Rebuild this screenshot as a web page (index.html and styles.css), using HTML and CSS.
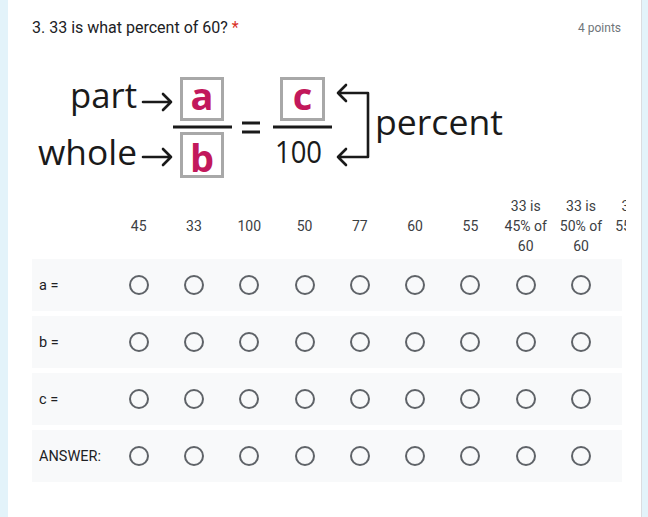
FILE: index.html
```html
<!DOCTYPE html>
<html lang="en">
<head>
<meta charset="utf-8">
<title>Question 3</title>
<link rel="stylesheet" href="styles.css">
</head>
<body>
<div class="card">
  <div class="title-row">
    <div class="title">3. 33 is what percent of 60? <span class="req">*</span></div>
    <div class="points">4 points</div>
  </div>
  <svg class="formula" width="480" height="125" viewBox="0 0 480 125" xmlns="http://www.w3.org/2000/svg">
    <g class="ink">
      <text x="38" y="48" font-size="34" textLength="67" lengthAdjust="spacingAndGlyphs">part</text>
      <text x="6" y="105" font-size="34" textLength="99" lengthAdjust="spacingAndGlyphs">whole</text>
      <text x="243" y="103" font-size="31" textLength="47" lengthAdjust="spacingAndGlyphs">100</text>
      <text x="343" y="75" font-size="34" textLength="128" lengthAdjust="spacingAndGlyphs">percent</text>
    </g>
    <g fill="none" stroke="#1a1a1a" stroke-width="2.6" stroke-linecap="round" stroke-linejoin="round">
      <path d="M111 42 H139 M131 34 L139 42 L131 50"/>
      <path d="M111 97 H139 M131 89 L139 97 L131 105"/>
      <path d="M306 33 H336 V97 H306 M314 25 L306 33 L314 41 M314 89 L306 97 L314 105"/>
    </g>
    <g stroke="#1a1a1a" stroke-width="3">
      <line x1="141" y1="67" x2="200" y2="67"/>
      <line x1="241" y1="67" x2="300" y2="67"/>
      <line x1="210" y1="63" x2="228" y2="63"/>
      <line x1="210" y1="72" x2="228" y2="72"/>
    </g>
    <g fill="none" stroke="#a8a8a8" stroke-width="3">
      <rect x="149.5" y="18.5" width="41" height="41"/>
      <rect x="149.5" y="73.5" width="41" height="43"/>
      <rect x="249.5" y="18.5" width="42" height="41"/>
    </g>
    <g class="var">
      <text x="170" y="50" font-size="38" text-anchor="middle">a</text>
      <text x="170" y="112" font-size="38" text-anchor="middle">b</text>
      <text x="270.5" y="50" font-size="38" text-anchor="middle">c</text>
    </g>
  </svg>
  <div class="grid-scroll">
    <div class="grid-head">
      <div class="lab"></div>
      <div class="col">45</div>
      <div class="col">33</div>
      <div class="col">100</div>
      <div class="col">50</div>
      <div class="col">77</div>
      <div class="col">60</div>
      <div class="col">55</div>
      <div class="col">33 is 45% of 60</div>
      <div class="col">33 is 50% of 60</div>
      <div class="col">33 is 55% of 60</div>
    </div>
    <div class="grid-row">
      <div class="lab">a =</div>
      <div class="cell"><span class="radio"></span></div>
      <div class="cell"><span class="radio"></span></div>
      <div class="cell"><span class="radio"></span></div>
      <div class="cell"><span class="radio"></span></div>
      <div class="cell"><span class="radio"></span></div>
      <div class="cell"><span class="radio"></span></div>
      <div class="cell"><span class="radio"></span></div>
      <div class="cell"><span class="radio"></span></div>
      <div class="cell"><span class="radio"></span></div>
      <div class="cell"></div>
    </div>
    <div class="grid-row">
      <div class="lab">b =</div>
      <div class="cell"><span class="radio"></span></div>
      <div class="cell"><span class="radio"></span></div>
      <div class="cell"><span class="radio"></span></div>
      <div class="cell"><span class="radio"></span></div>
      <div class="cell"><span class="radio"></span></div>
      <div class="cell"><span class="radio"></span></div>
      <div class="cell"><span class="radio"></span></div>
      <div class="cell"><span class="radio"></span></div>
      <div class="cell"><span class="radio"></span></div>
      <div class="cell"></div>
    </div>
    <div class="grid-row">
      <div class="lab">c =</div>
      <div class="cell"><span class="radio"></span></div>
      <div class="cell"><span class="radio"></span></div>
      <div class="cell"><span class="radio"></span></div>
      <div class="cell"><span class="radio"></span></div>
      <div class="cell"><span class="radio"></span></div>
      <div class="cell"><span class="radio"></span></div>
      <div class="cell"><span class="radio"></span></div>
      <div class="cell"><span class="radio"></span></div>
      <div class="cell"><span class="radio"></span></div>
      <div class="cell"></div>
    </div>
    <div class="grid-row">
      <div class="lab">ANSWER:</div>
      <div class="cell"><span class="radio"></span></div>
      <div class="cell"><span class="radio"></span></div>
      <div class="cell"><span class="radio"></span></div>
      <div class="cell"><span class="radio"></span></div>
      <div class="cell"><span class="radio"></span></div>
      <div class="cell"><span class="radio"></span></div>
      <div class="cell"><span class="radio"></span></div>
      <div class="cell"><span class="radio"></span></div>
      <div class="cell"><span class="radio"></span></div>
      <div class="cell"></div>
    </div>
  </div>
</div>
</body>
</html>
```

FILE: styles.css
```css
html, body {
  margin: 0;
  padding: 0;
}
body {
  background: #e3f3fa;
  font-family: Roboto, "Liberation Sans", Arial, sans-serif;
  color: #202124;
  height: 517px;
  overflow: hidden;
}
.card {
  margin-left: 8px;
  width: 634px;
  height: 517px;
  background: #ffffff;
  border-right: 1px solid #dadce0;
  box-sizing: border-box;
  padding: 16px 20px 0 24px;
}
.title-row {
  display: flex;
  justify-content: space-between;
  align-items: center;
  height: 24px;
}
.title {
  font-size: 16px;
  line-height: 24px;
  color: #202124;
}
.req {
  color: #d93025;
}
.points {
  font-size: 12px;
  color: #70757a;
  line-height: 24px;
}
.formula {
  display: block;
  margin-top: 20px;
}
.ink text {
  font-family: "Open Sans", "DejaVu Sans", sans-serif;
  fill: #1a1a1a;
}
.var text {
  font-family: "Open Sans", "DejaVu Sans", sans-serif;
  font-weight: 700;
  fill: #c2185b;
}
.grid-scroll {
  margin-top: 10px;
  width: 594px;
  overflow: hidden;
}
.grid-head, .grid-row {
  display: grid;
  grid-template-columns: 79px repeat(10, 55.3px);
  align-items: center;
}
.grid-head {
  height: 62px;
  margin-bottom: 2px;
}
.col {
  font-size: 14px;
  line-height: 20px;
  color: #3c4043;
  text-align: center;
  padding: 0 2px;
}
.grid-row {
  width: 590px;
  height: 52px;
  background: #f8f9fa;
  margin-bottom: 5px;
}
.lab {
  font-size: 14.5px;
  color: #202124;
  padding-left: 7px;
  white-space: nowrap;
}
.cell {
  display: flex;
  justify-content: center;
  align-items: center;
}
.radio {
  width: 20px;
  height: 20px;
  border: 2px solid #5f6368;
  border-radius: 50%;
  box-sizing: border-box;
}
```
